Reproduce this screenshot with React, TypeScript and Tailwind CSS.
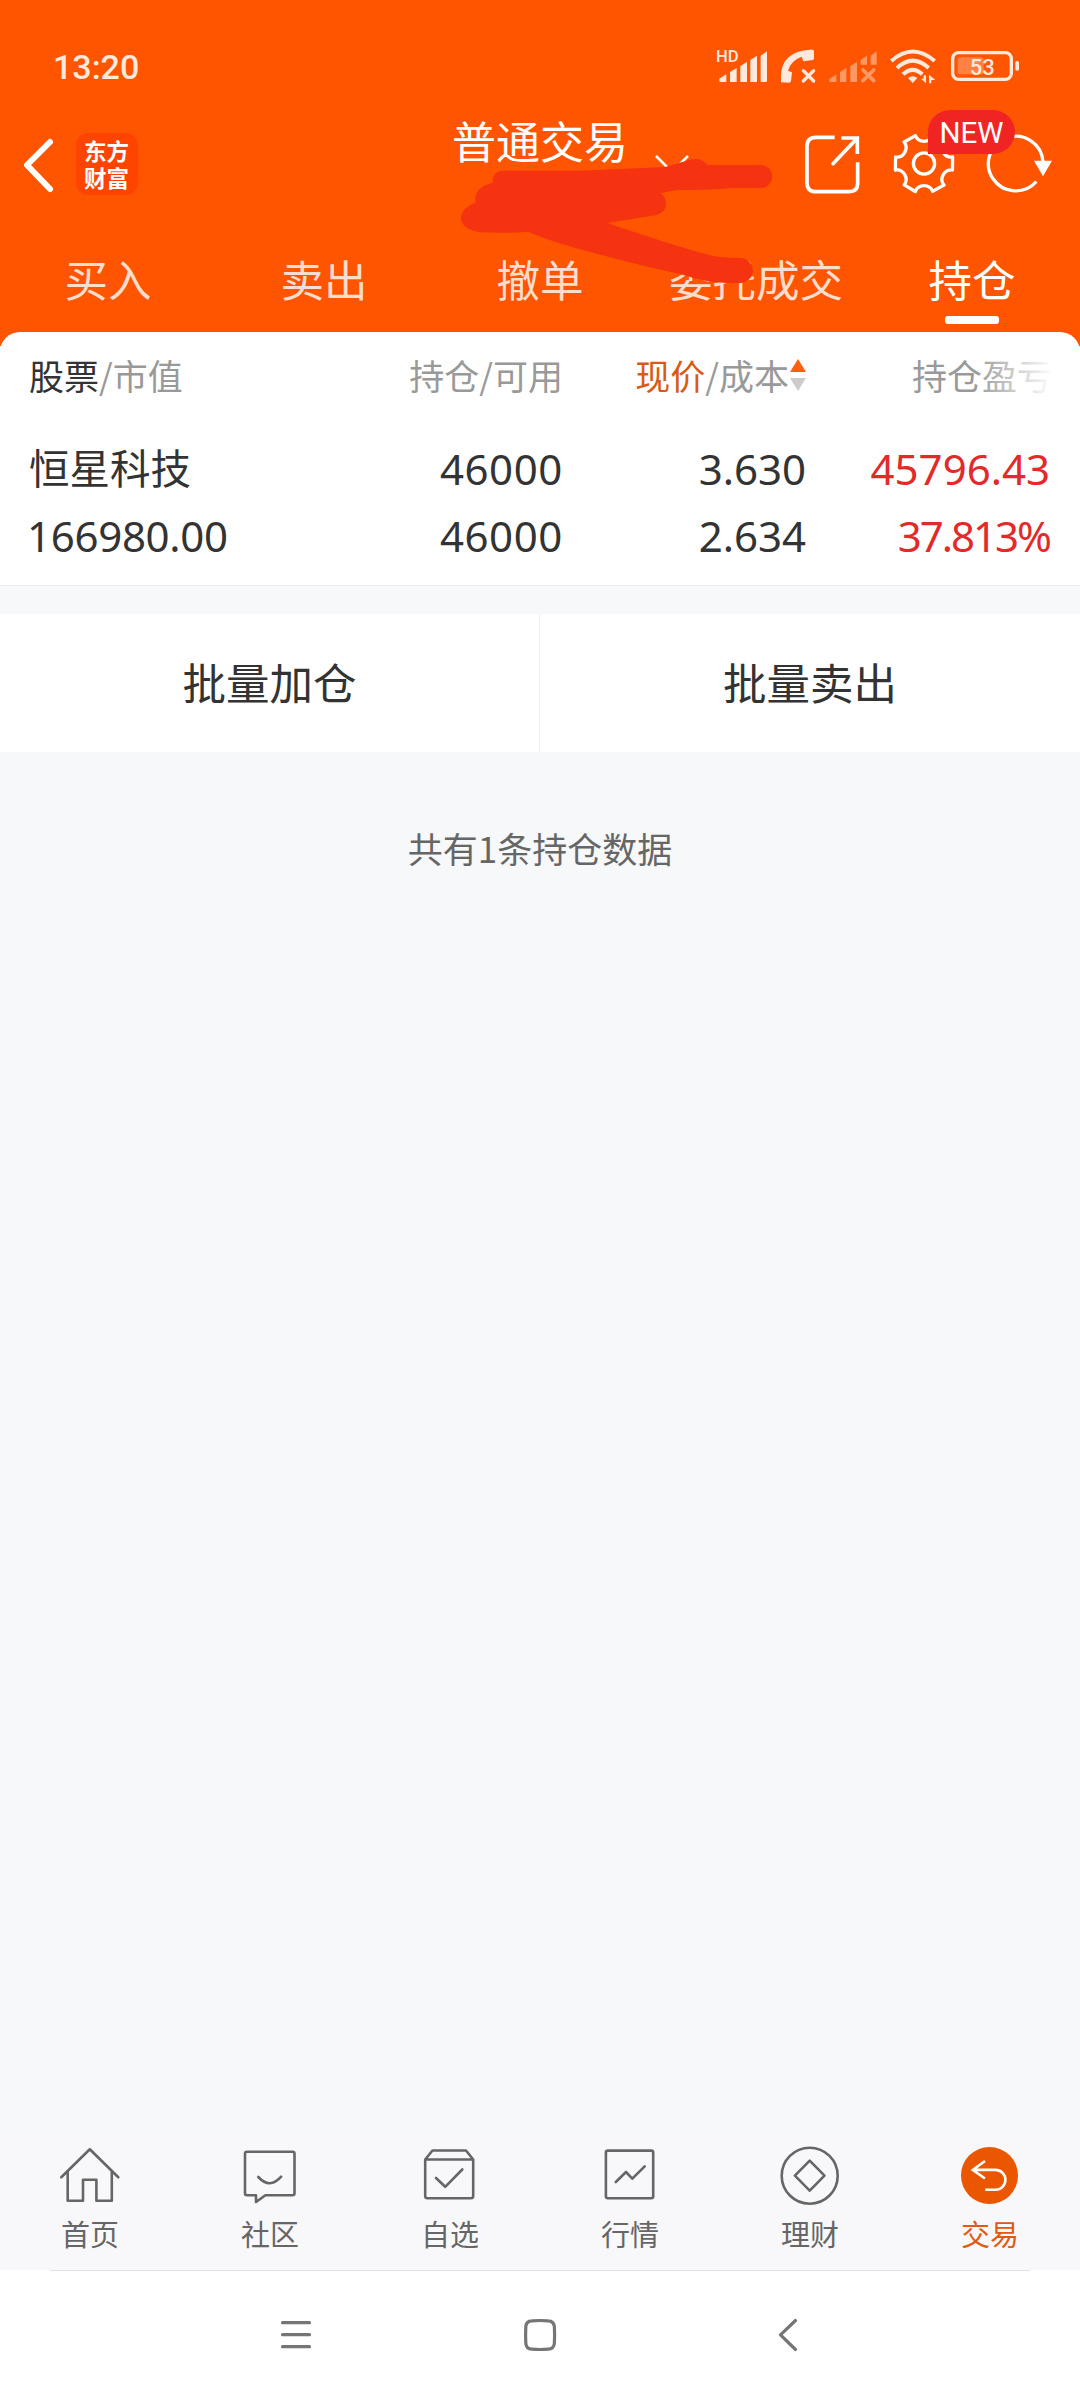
import type { ReactNode } from 'react'
import clsx from 'clsx'

interface Holding {
  name: string
  marketValue: string
  amount: string
  available: string
  price: string
  cost: string
  profit: string
  profitRate: string
}

const tabs = ['买入', '卖出', '撤单', '委托成交', '持仓']

const holdings: Holding[] = [
  {
    name: '恒星科技',
    marketValue: '166980.00',
    amount: '46000',
    available: '46000',
    price: '3.630',
    cost: '2.634',
    profit: '45796.43',
    profitRate: '37.813%',
  },
]

function StatusIcons() {
  return (
    <svg viewBox="168 84 915 114" className="w-[305px] h-[38px]" fill="#ffe9dd">
      <text x="168" y="126" fontSize="50" fontWeight="500" fontFamily="Roboto, sans-serif">HD</text>
      {/* SIM 1 */}
      <path d="M178 176 L199 163 V186 H182 Q178 186 178 182Z M210 156 L230 144 V186 H210Z M241 138 L261 126 V186 H241Z M271 120 L291 107 V186 H271Z M302 107 L321 94 V182 Q321 186 317 186 H302Z" />
      {/* wifi calling off */}
      <path d="M363 187 V165 Q366 95 450 89 Q462 88 462 94 V116 Q460 121 454 121 L430 124 L425 110 Q392 122 384 152 L396 157 L393 183 Q392 188 387 188Z" />
      <path d="M430 152 L461 183 M461 152 L430 183" stroke="#ffe9dd" strokeWidth="10" strokeLinecap="round" />
      {/* SIM 2 */}
      <g opacity="0.45">
        <path d="M508 177 L529 163 V186 H512 Q508 186 508 182Z M540 156 L559 144 V186 H540Z M571 138 L591 126 V186 H571Z M602 120 L621 107 V134 H602Z M632 107 L650 94 V134 H632Z" />
        <path d="M609 150 L641 182 M641 150 L609 182" stroke="#ffe9dd" strokeWidth="11" strokeLinecap="round" />
      </g>
      {/* wifi */}
      <g fill="none" stroke="#ffe9dd" strokeWidth="12">
        <path d="M694 123 Q758 66 824 123" />
        <path d="M711 144 Q758 100 806 144" />
        <path d="M729 163 Q758 136 787 163" />
      </g>
      <path d="M744 174 Q758 164 772 174 L758 189Z" />
      <path d="M783 176 H791 V166 H798 V190Z M807 190 V164 L826 180 H814 V190Z" />
      {/* battery */}
      <rect x="878" y="98" width="176" height="80" rx="18" fill="none" stroke="#ffe9dd" strokeWidth="10" />
      <rect x="893" y="112" width="78" height="51" rx="8" opacity="0.3" />
      <rect x="1066" y="123" width="11" height="29" rx="5" />
      <text x="929" y="164" fontSize="66" fontWeight="500" fontFamily="Roboto, sans-serif">53</text>
    </svg>
  )
}

function ShareIcon() {
  return (
    <svg viewBox="436 340 168 186" className="w-[56px] h-[62px]" fill="none" stroke="white" strokeWidth="11">
      <path d="M525 353 H469 Q442 353 442 380 V489 Q442 516 469 516 H568 Q594 516 594 490 V428" />
      <path d="M545 355 H593 V403" />
      <path d="M591 357 L520 432" strokeLinecap="round" />
    </svg>
  )
}

function GearIcon() {
  return (
    <svg viewBox="700 340 186 184" className="w-[62px] h-[61px]" fill="none" stroke="white" strokeWidth="10" strokeLinejoin="round" strokeLinecap="round">
      {[0, 60, 120, 180, 240, 300].map((deg) => (
        <path key={deg} d="M767 516 Q774 499 793 499 Q812 499 819 516 L853 497" transform={`rotate(${deg} 793 432)`} />
      ))}
      <circle cx="793" cy="432" r="32" />
    </svg>
  )
}

function RefreshIcon() {
  return (
    <svg viewBox="978 344 204 182" className="w-[68px] h-[61px]" fill="none" stroke="white" strokeWidth="10">
      <path d="M1129 489 A82 82 0 1 1 1149 430" />
      <path d="M1122 427 H1176 L1149 473Z" fill="white" stroke="none" />
    </svg>
  )
}

// Freehand marker stroke over the account name
function MarkerStroke() {
  return (
    <svg viewBox="120 171 960 390" className="absolute left-[460px] top-[157px] w-[320px] h-[130px]" fill="#f63310">
      <path d="M248 212 H480 L735 201 L800 182 Q840 168 862 195 H1022 A34 34 0 0 1 1022 264 H930 Q880 270 770 270 L722 280 Q738 290 738 312 Q738 335 710 345 L562 369 Q740 430 870 466 Q900 474 962 474 A37 37 0 0 1 960 549 H920 Q860 548 780 522 Q640 492 520 458 Q400 428 325 396 Q250 400 180 397 Q123 388 123 352 Q126 322 166 308 Q160 262 218 248 Q216 214 248 212Z" />
    </svg>
  )
}

function NavIcon({ children }: { children: ReactNode }) {
  return (
    <svg viewBox="0 0 64 64" className="w-16 h-16" fill="none" stroke="#666" strokeWidth="2.6" strokeLinejoin="round" strokeLinecap="round">
      {children}
    </svg>
  )
}

const navItems = [
  {
    label: '首页',
    icon: <path d="M3.3 33.3 L31.8 5.3 L60.3 33.3 M9.7 27.5 V56.7 H25 V35.7 H38.4 V56.7 H53.8 V27.5" />,
  },
  {
    label: '社区',
    icon: (
      <>
        <path d="M9 7.7 H54.5 Q56.5 7.7 56.5 9.7 V49.3 Q56.5 51.3 54.5 51.3 H27.4 L18 58 V51.3 H9 Q7 51.3 7 49.3 V9.7 Q7 7.7 9 7.7Z" />
        <path d="M20.3 33 Q31.7 45.5 43.2 32.7" />
      </>
    ),
  },
  {
    label: '自选',
    icon: (
      <>
        <path d="M7.2 15.5 V52 Q7.2 54.3 9.5 54.3 H53 Q55.2 54.3 55.2 52 V15.5 M7.2 15.5 L14.5 6.5 H48 L55.2 15.5Z" />
        <path d="M18 34 L27.2 42.8 L44.3 25.5" />
      </>
    ),
  },
  {
    label: '行情',
    icon: (
      <>
        <rect x="7.9" y="6.6" width="47.3" height="47.7" rx="2" />
        <path d="M17.8 38 L28 28 L34.3 34.7 L46.7 22.3" />
      </>
    ),
  },
  {
    label: '理财',
    icon: (
      <>
        <circle cx="31.7" cy="31.7" r="28" />
        <path d="M31.7 16.7 L46.5 31.7 L31.7 46.7 L16.9 31.7Z" />
      </>
    ),
  },
  {
    label: '交易',
    icon: (
      <>
        <circle cx="31.5" cy="31.5" r="28.5" fill="#eb5600" stroke="none" />
        <path d="M27 17 L14.8 25.9 L27 34.5 M14.8 25.9 H37.5 A9.9 9.9 0 0 1 37.5 45.7 H27.3" stroke="white" strokeLinecap="butt" strokeLinejoin="miter" />
      </>
    ),
  },
]

export default function App() {
  return (
    <div className="relative w-[1080px] h-[2400px] flex flex-col overflow-hidden bg-white text-[#333] font-['Noto_Sans_CJK_SC',sans-serif]">
      {/* Header */}
      <header className="h-[346px] shrink-0 bg-[#ff5500] text-white">
        <div className="h-[87px] pt-[46px] pl-[53px] pr-[59px] flex items-center justify-between">
          <span className="text-[34px] leading-none font-medium text-[#ffe9dd] font-[Roboto,sans-serif]">13:20</span>
          <StatusIcons />
        </div>

        <div className="h-[153px] pr-[26px] flex items-center">
          <div className="w-[452px] pl-[21px] flex items-center">
            <svg viewBox="0 0 36 60" className="w-[36px] h-[60px]" fill="none" stroke="white" strokeWidth="6" strokeLinecap="round" strokeLinejoin="round">
              <path d="M29 8 L6 31 L29 55" />
            </svg>
            <div className="ml-[19px] w-[62px] h-[62px] rounded-[12px] bg-[#ff4400] flex items-center justify-center">
              <p className="w-[46px] text-[22.5px] leading-[27px] font-bold break-all">东方财富</p>
            </div>
          </div>
          <span className="pb-[48px] text-[44px] leading-[60px] whitespace-nowrap">普通交易</span>
          <svg viewBox="0 0 36 20" className="ml-[26px] mt-[2px] w-[36px] h-[20px]" fill="none" stroke="white" strokeWidth="2.5">
            <path d="M2 1 L18 17 L34 1" />
          </svg>
          <div className="ml-auto flex items-center">
            <ShareIcon />
            <div className="relative ml-8">
              <GearIcon />
              <span className="absolute left-[35px] top-[-23px] w-[87px] h-[44px] pt-[3px] rounded-[22px] rounded-bl-none bg-[#f12424] flex items-center justify-center text-[29.5px] leading-none font-[Roboto,sans-serif]">
                NEW
              </span>
            </div>
            <div className="ml-[31px]">
              <RefreshIcon />
            </div>
          </div>
        </div>

        <nav className="grid grid-cols-5">
          {tabs.map((tab) => (
            <div key={tab} className="flex flex-col items-center">
              <span className={clsx('h-[76px] leading-[78px] text-[43.5px]', tab === '持仓' ? 'text-white' : 'text-[#ffddcc]')}>
                {tab}
              </span>
              {tab === '持仓' && <span className="w-[54px] h-[8px] rounded-[3px] bg-white" />}
            </div>
          ))}
        </nav>
      </header>

      <MarkerStroke />

      {/* Holdings */}
      <section className="relative z-10 -mt-[14px] h-[254px] shrink-0 rounded-t-[20px] bg-white border-b border-[#ececec]">
        <div className="h-[86px] pl-[29px] pr-[28px] grid grid-cols-[1fr_242px_243px_246px] text-[35px] leading-[86px] text-[#999] whitespace-nowrap">
          <div>
            <span className="text-[#333]">股票</span>/市值
          </div>
          <div className="text-right">持仓/可用</div>
          <div className="flex items-center justify-end">
            <span><span className="text-[#d95b13]">现价</span>/成本</span>
            <svg viewBox="0 0 16 32" className="w-[16px] h-[32px] ml-px">
              <path d="M8 0 L16 13 H0Z" fill="#ff6010" />
              <path d="M8 32 L16 19 H0Z" fill="#ccc" />
            </svg>
          </div>
          <div className="relative text-right">
            持仓盈亏
            <span className="absolute right-[-2px] top-[20px] h-[48px] w-[80px] bg-linear-to-r from-white/0 to-white" />
          </div>
        </div>
        {holdings.map((item) => (
          <div key={item.name} className="mt-[17px] pl-[29px] pr-[30px] grid grid-cols-[1fr_242px_243px_244px] text-[42px] leading-[67px] whitespace-nowrap font-['Noto_Sans','Noto_Sans_CJK_SC',sans-serif]">
            <div>
              <p className="text-[40.5px]">{item.name}</p>
              <p className="-ml-[2px] tracking-[-0.3px]">{item.marketValue}</p>
            </div>
            <div className="text-right tracking-[0.6px]">
              <p>{item.amount}</p>
              <p>{item.available}</p>
            </div>
            <div className="text-right">
              <p>{item.price}</p>
              <p>{item.cost}</p>
            </div>
            <div className="text-right text-[#e22a2a]">
              <p>{item.profit}</p>
              <p className="tracking-[-2px]">{item.profitRate}</p>
            </div>
          </div>
        ))}
      </section>

      <main className="flex-1 pt-[28px] bg-[#f7f8fa]">
        <div className="h-[138px] grid grid-cols-2 bg-white text-[43.5px] leading-[136px] text-center">
          <div className="border-r border-[#eee]">批量加仓</div>
          <div>批量卖出</div>
        </div>
        <p className="mt-[66px] text-center text-[35px] leading-[60px] text-[#666]">共有1条持仓数据</p>
      </main>

      {/* Bottom navigation */}
      <nav className="h-[136px] shrink-0 pt-[10px] grid grid-cols-6 bg-[#f8f8fa]">
        {navItems.map((item) => (
          <div key={item.label} className="flex flex-col items-center">
            <NavIcon>{item.icon}</NavIcon>
            <span className={clsx('mt-[5px] text-[29px] leading-[40px]', item.label === '交易' ? 'text-[#e2590f]' : 'text-[#666]')}>
              {item.label}
            </span>
          </div>
        ))}
      </nav>

      {/* System navigation */}
      <div className="h-[130px] shrink-0 px-[50px]">
        <div className="h-px bg-[#e2e2e2]" />
        <div className="pt-[44px] pl-[226px] flex items-center">
          <svg viewBox="0 0 40 40" className="w-10 h-10" stroke="#757575" strokeWidth="3.2" strokeLinecap="round">
            <path d="M6.5 7.7 H33.5 M6.5 19.7 H33.5 M6.5 31.7 H33.5" />
          </svg>
          <svg viewBox="0 0 40 40" className="w-10 h-10 ml-[204px]" fill="none" stroke="#757575" strokeWidth="3.2">
            <path d="M12 5.8 Q20 5.2 28 5.8 Q34 6 34.4 12 Q34.8 20 34.4 28 Q34 34 28 34.2 Q20 34.8 12 34.2 Q6 34 5.8 28 Q5.4 20 5.8 12 Q6 6 12 5.8Z" />
          </svg>
          <svg viewBox="0 0 40 40" className="w-10 h-10 ml-[208px]" fill="none" stroke="#757575" strokeWidth="3.2" strokeLinecap="round" strokeLinejoin="round">
            <path d="M27.5 5.5 L12.5 19.8 L27.5 34.5" />
          </svg>
        </div>
      </div>
    </div>
  )
}
